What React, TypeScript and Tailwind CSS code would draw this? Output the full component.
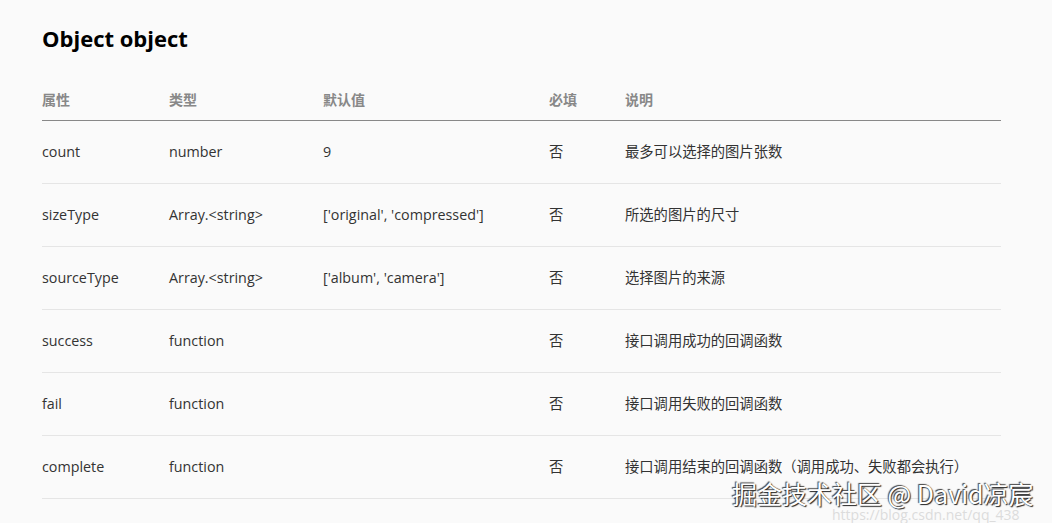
const headers = ['属性', '类型', '默认值', '必填', '说明'];

const rows = [
  ['count', 'number', '9', '否', '最多可以选择的图片张数'],
  ['sizeType', 'Array.<string>', "['original', 'compressed']", '否', '所选的图片的尺寸'],
  ['sourceType', 'Array.<string>', "['album', 'camera']", '否', '选择图片的来源'],
  ['success', 'function', '', '否', '接口调用成功的回调函数'],
  ['fail', 'function', '', '否', '接口调用失败的回调函数'],
  ['complete', 'function', '', '否', '接口调用结束的回调函数（调用成功、失败都会执行）'],
];

const cols = 'grid grid-cols-[127px_154px_226px_76px_1fr]';

export default function App() {
  return (
    <div
      className="relative w-[1052px] h-[523px] overflow-hidden bg-[#fafafa] text-[#333]"
      style={{ fontFamily: '"Open Sans", "Noto Sans", "Noto Sans CJK SC", sans-serif' }}
    >
      <div className="pl-[42px] pr-[51px] pt-[23px]">
        <h2 className="text-[22px] font-bold leading-[30px] text-black">Object object</h2>

        <div className="mt-[26px]">
          <div className={`${cols} h-[42px] items-center border-b border-[#888] text-[14px] font-bold text-[#888]`}>
            {headers.map((h) => (
              <div key={h}>{h}</div>
            ))}
          </div>
          {rows.map((r) => (
            <div
              key={r[0]}
              className={`${cols} h-[63px] items-center border-b border-[#e5e5e5] text-[14.3px]`}
            >
              {r.map((c, i) => (
                <div key={i} className="whitespace-nowrap">{c}</div>
              ))}
            </div>
          ))}
        </div>
      </div>

      <div className="absolute left-[732px] top-[480px] whitespace-nowrap text-[25px] leading-[26px] text-white [text-shadow:1px_1px_1px_#222,-1px_-1px_1px_#444]"
        style={{ fontFamily: '"Noto Sans CJK SC", "Noto Sans", sans-serif' }}>
        掘金技术社区 @ David凉宸
      </div>
      <div className="absolute left-[832px] top-[506px] whitespace-nowrap text-[14px] leading-[17px] text-[#dcdcdc]">
        https://blog.csdn.net/qq_438
      </div>
    </div>
  );
}
